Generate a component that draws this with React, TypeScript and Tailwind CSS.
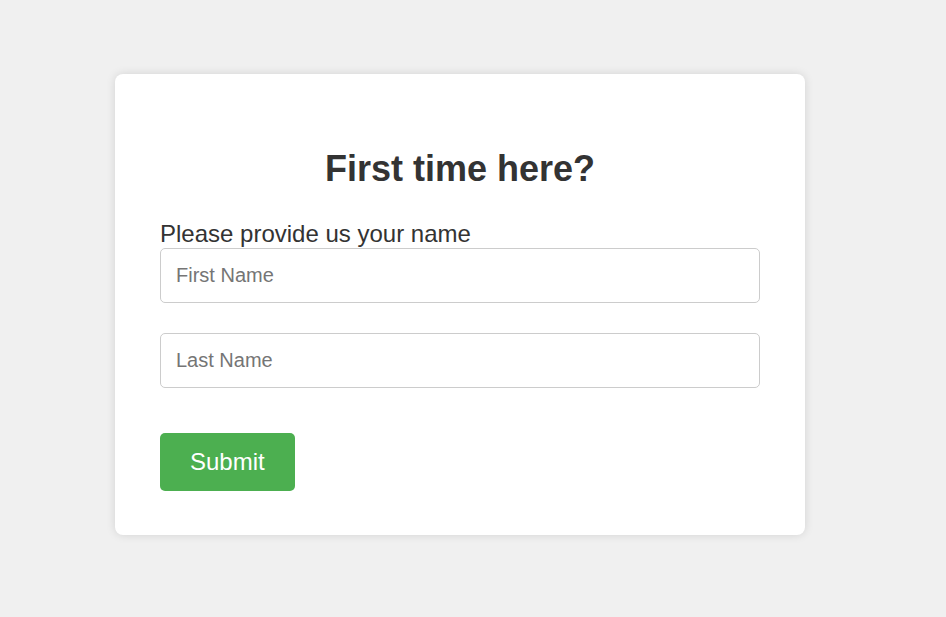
export default function App() {
  return (
    <div className="min-h-screen bg-[#f0f0f0] pl-[115px] pt-[74px] font-['Liberation_Sans',Arial,sans-serif] text-[#333]">
      {/* Card */}
      <div className="w-[690px] rounded-[8px] bg-white px-[45px] pt-[75px] pb-[44px] shadow-[0_0_10px_rgba(0,0,0,0.12)]">
        <h1 className="text-center text-[36px] font-bold leading-[40px]">First time here?</h1>
        <form className="mt-[31px] flex flex-col" onSubmit={(e) => e.preventDefault()}>
          <label className="text-[24px] leading-[27px]">Please provide us your name</label>
          <input
            type="text"
            placeholder="First Name"
            className="mt-[1px] h-[55px] w-full rounded-[5px] border border-[#ccc] px-[15px] text-[20px] placeholder:text-[#757575] outline-none"
          />
          <input
            type="text"
            placeholder="Last Name"
            className="mt-[30px] h-[55px] w-full rounded-[5px] border border-[#ccc] px-[15px] text-[20px] placeholder:text-[#757575] outline-none"
          />
          <div className="mt-[45px]">
            <button
              type="submit"
              className="h-[58px] rounded-[5px] bg-[#4caf50] px-[30px] text-[24px] text-white"
            >
              Submit
            </button>
          </div>
        </form>
      </div>
    </div>
  );
}
